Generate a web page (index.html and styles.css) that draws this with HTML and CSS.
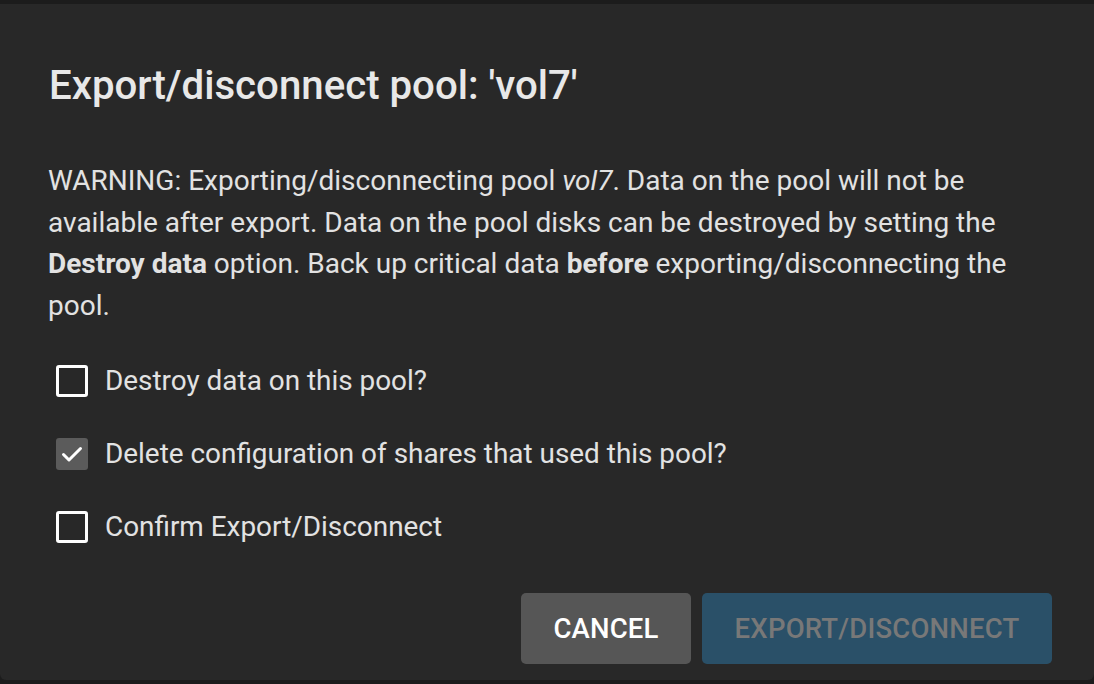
FILE: index.html
```html
<!DOCTYPE html>
<html>
<head>
<meta charset="utf-8">
<link rel="stylesheet" href="styles.css">
</head>
<body>
<div class="dialog">
  <h1 class="title">Export/disconnect pool: 'vol7'</h1>
  <p class="warning">WARNING: Exporting/disconnecting pool <em>vol7</em>. Data on the pool will not be available after export. Data on the pool disks can be destroyed by setting the <strong>Destroy data</strong> option. Back up critical data <strong>before</strong> exporting/disconnecting the pool.</p>
  <div class="options">
    <label class="option"><span class="box"></span><span class="label">Destroy data on this pool?</span></label>
    <label class="option"><span class="box checked"><svg viewBox="0 0 32 32" width="32" height="32"><path d="M7.5 16.5 L13 22 L24.5 10.5" fill="none" stroke="#fff" stroke-width="3" stroke-linecap="round" stroke-linejoin="round"/></svg></span><span class="label">Delete configuration of shares that used this pool?</span></label>
    <label class="option"><span class="box"></span><span class="label">Confirm Export/Disconnect</span></label>
  </div>
  <div class="actions">
    <button class="btn cancel">CANCEL</button>
    <button class="btn primary">EXPORT/DISCONNECT</button>
  </div>
</div>
</body>
</html>
```

FILE: styles.css
```css
html, body {
  margin: 0;
  padding: 0;
  background: #1c1c1c;
  width: 1094px;
  height: 684px;
  overflow: hidden;
}
body {
  padding-top: 4px;
  box-sizing: border-box;
  font-family: Roboto, "Liberation Sans", sans-serif;
}
.dialog {
  height: 676px;
  background: #282828;
  border-radius: 0 0 6px 6px;
  box-sizing: border-box;
  padding: 58px 42px 0 48px;
  display: flex;
  flex-direction: column;
}
.title {
  margin: 0;
  font-size: 40.2px;
  font-weight: 500;
  line-height: 48px;
  color: #e8e8e8;
  padding-left: 1px;
}
.warning {
  margin: 50px 0 0 0;
  font-size: 28px;
  line-height: 41.5px;
  color: #e2e2e2;
}
.warning em { font-style: italic; }
.warning strong { font-weight: 700; }
.options {
  margin-top: 38px;
  padding-left: 8px;
  display: flex;
  flex-direction: column;
  gap: 40px;
}
.option {
  display: flex;
  align-items: center;
  gap: 17px;
  height: 33px;
}
.box {
  width: 32px;
  height: 32px;
  box-sizing: border-box;
  border: 3.5px solid #ffffff;
  border-radius: 3px;
  flex: none;
}
.box.checked {
  border: none;
  background: #5b5b5b;
}
.box svg { display: block; }
.label {
  font-size: 27.9px;
  color: #e2e2e2;
}
.actions {
  margin-top: auto;
  margin-bottom: 16px;
  display: flex;
  justify-content: flex-end;
  gap: 11px;
}
.btn {
  height: 71px;
  border: none;
  border-radius: 5px;
  font-family: Roboto, "Liberation Sans", sans-serif;
  font-size: 27.5px;
  font-weight: 500;
  letter-spacing: 0.2px;
  padding: 0;
}
.cancel {
  width: 170px;
  background: #565656;
  color: #ffffff;
}
.primary {
  width: 350px;
  background: #2a5068;
  color: #787878;
}
```
